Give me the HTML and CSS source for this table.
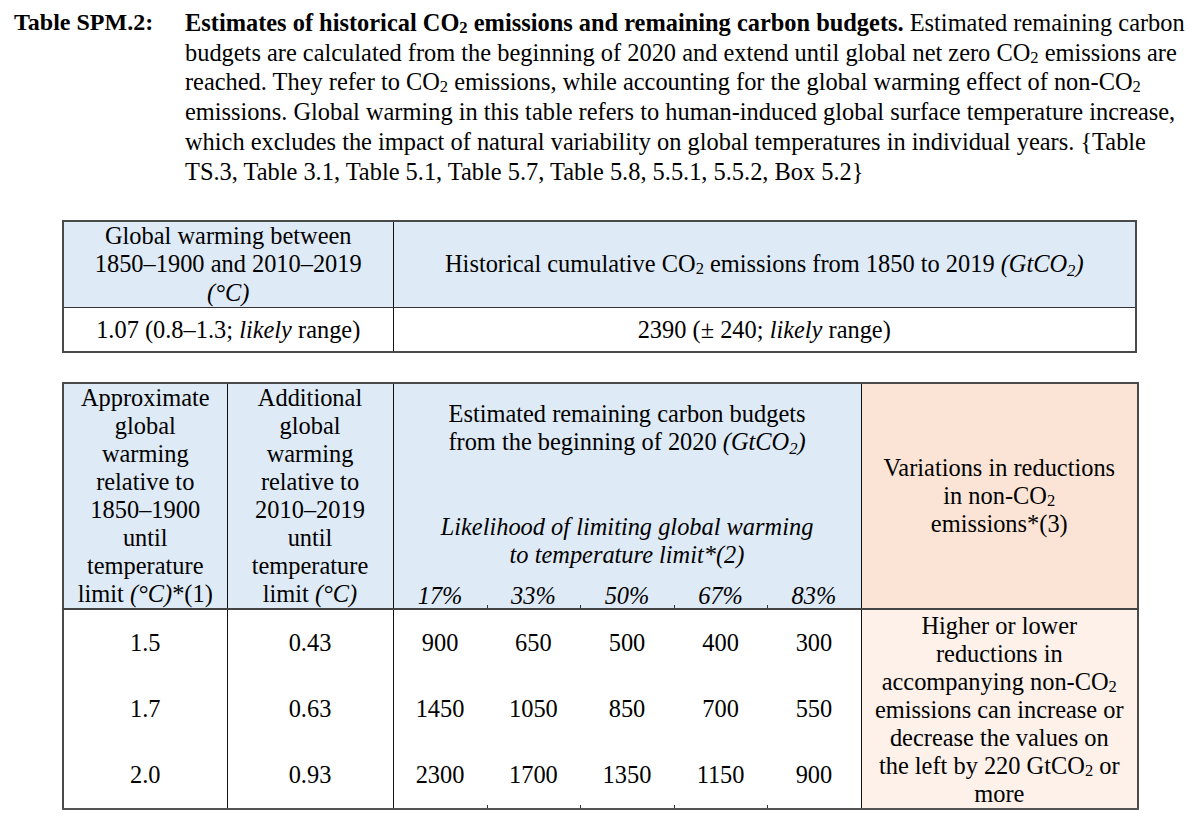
FILE: index.html
```html
<!DOCTYPE html>
<html lang="en">
<head>
<meta charset="utf-8">
<title>Table SPM.2</title>
<link rel="stylesheet" href="styles.css">
</head>
<body>
<div class="caption">
  <div class="caption-label">Table SPM.2:</div>
  <p class="caption-text"><b>Estimates of historical CO<span class="sub">2</span> emissions and remaining carbon budgets.</b> Estimated remaining carbon<br>budgets are calculated from the beginning of 2020 and extend until global net zero CO<span class="sub">2</span> emissions are<br>reached. They refer to CO<span class="sub">2</span> emissions, while accounting for the global warming effect of non-CO<span class="sub">2</span><br>emissions. Global warming in this table refers to human-induced global surface temperature increase,<br>which excludes the impact of natural variability on global temperatures in individual years. {Table<br>TS.3, Table 3.1, Table 5.1, Table 5.7, Table 5.8, 5.5.1, 5.5.2, Box 5.2}</p>
</div>

<table class="t t1">
  <colgroup><col class="w-left"><col></colgroup>
  <tr class="t1-head">
    <th class="blue">Global warming between<br>1850–1900 and 2010–2019<br><i>(°C)</i></th>
    <th class="blue bl">Historical cumulative CO<span class="sub">2</span> emissions from 1850 to 2019 <i>(GtCO<span class="sub">2</span>)</i></th>
  </tr>
  <tr class="t1-row">
    <td>1.07 (0.8–1.3; <i>likely</i> range)</td>
    <td class="bl">2390 (± 240; <i>likely</i> range)</td>
  </tr>
</table>

<table class="t t2">
  <colgroup>
    <col class="w-a"><col class="w-b">
    <col class="w-s"><col class="w-s"><col class="w-s"><col class="w-s"><col class="w-s">
    <col class="w-d">
  </colgroup>
  <tr>
    <th rowspan="3" class="blue hb">Approximate<br>global<br>warming<br>relative to<br>1850–1900<br>until<br>temperature<br>limit <i>(°C)</i>*(1)</th>
    <th rowspan="3" class="blue bl hb">Additional<br>global<br>warming<br>relative to<br>2010–2019<br>until<br>temperature<br>limit <i>(°C)</i></th>
    <th colspan="5" class="blue bl budget">Estimated remaining carbon budgets<br>from the beginning of 2020 <i>(GtCO<span class="sub">2</span>)</i></th>
    <th rowspan="3" class="pink bl hb variations">Variations in reductions<br>in non-CO<span class="sub">2</span><br>emissions*(3)</th>
  </tr>
  <tr>
    <th colspan="5" class="blue bl likely"><i>Likelihood of limiting global warming<br>to temperature limit*(2)</i></th>
  </tr>
  <tr class="pcts">
    <th class="blue bl hb"><i>17%</i></th>
    <th class="blue hb tick"><i>33%</i></th>
    <th class="blue hb tick"><i>50%</i></th>
    <th class="blue hb tick"><i>67%</i></th>
    <th class="blue hb tick"><i>83%</i></th>
  </tr>
  <tr class="data">
    <td>1.5</td>
    <td class="bl">0.43</td>
    <td class="bl">900</td>
    <td>650</td>
    <td>500</td>
    <td>400</td>
    <td>300</td>
    <td rowspan="3" class="pink-lt bl note">Higher or lower<br>reductions in<br>accompanying non-CO<span class="sub">2</span><br>emissions can increase or<br>decrease the values on<br>the left by 220 GtCO<span class="sub">2</span> or<br>more</td>
  </tr>
  <tr class="data">
    <td>1.7</td>
    <td class="bl">0.63</td>
    <td class="bl">1450</td>
    <td>1050</td>
    <td>850</td>
    <td>700</td>
    <td>550</td>
  </tr>
  <tr class="data last">
    <td>2.0</td>
    <td class="bl">0.93</td>
    <td class="bl">2300</td>
    <td class="tick">1700</td>
    <td class="tick">1350</td>
    <td class="tick">1150</td>
    <td class="tick">900</td>
  </tr>
</table>
</body>
</html>
```

FILE: styles.css
```css
* {
  box-sizing: border-box;
}

body {
  margin: 8px;
  background: #ffffff;
  color: #000000;
  font-family: "Liberation Serif", "Times New Roman", serif;
  font-size: 24.4px;
}

.sub {
  font-size: 0.68em;
  line-height: 0;
  vertical-align: -0.12em;
}

i .sub {
  vertical-align: -0.22em;
}

/* Caption */
.caption {
  display: flex;
  padding-left: 6px;
  line-height: 29.7px;
  white-space: nowrap;
}

.caption-label {
  flex: none;
  width: 171px;
  font-size: 24px;
  font-weight: bold;
}

.caption-text {
  margin: 0;
}

/* Tables */
.t {
  border-collapse: collapse;
  table-layout: fixed;
  width: 1075px;
  margin-left: 54px;
  border: 2px solid #4a4a4a;
  line-height: 28.2px;
  text-align: center;
}

.t th,
.t td {
  padding: 0;
  border: none;
  font-weight: normal;
  white-space: nowrap;
}

.bl {
  border-left: 1px solid #111111 !important;
}

.blue {
  background-color: #deeaf6;
}

.pink {
  background-color: #fbe4d5;
}

.pink-lt {
  background-color: #fdf1ea;
}

/* Table 1 */
.t1 {
  margin-top: 34px;
}

.w-left {
  width: 330px;
}

.t1-head th {
  border-bottom: 1px solid #333333;
  padding: 0;
  vertical-align: middle;
}

.t1-row td {
  padding: 8px 0 7px;
}

/* Table 2 */
.t2 {
  margin-top: 29px;
  border-bottom: 2px solid #555555;
  line-height: 28px;
}

.w-a {
  width: 164px;
}

.w-b {
  width: 166px;
}

.w-s {
  width: 93.6px;
}

.w-d {
  width: 277px;
}

.hb {
  border-bottom: 2px solid #444444 !important;
}

.budget {
  padding: 16px 0 15px !important;
}

.likely {
  padding: 42px 0 15px !important;
}

.pcts th {
  height: 24px;
  line-height: 24px;
  vertical-align: bottom;
}

.variations {
  vertical-align: middle;
}

.tick {
  background-image: linear-gradient(#333333, #333333);
  background-position: left bottom;
  background-size: 1px 3px;
  background-repeat: no-repeat;
}

.data td {
  height: 66px;
  vertical-align: middle;
}

.note {
  padding: 2px 0 0 !important;
  vertical-align: middle !important;
}
```
